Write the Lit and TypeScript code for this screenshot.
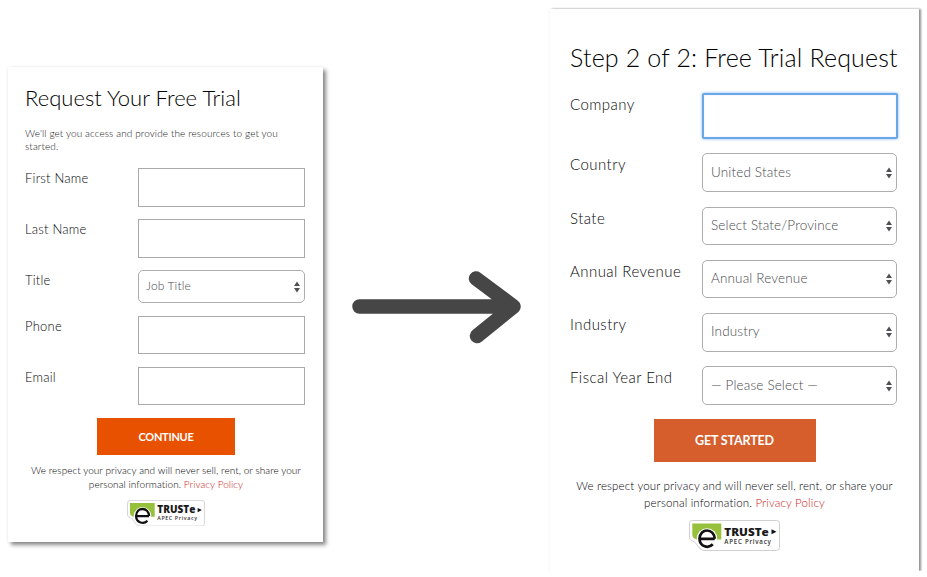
import { LitElement, html, svg, css } from "lit";
import { customElement, property } from "lit/decorators.js";

interface Field {
  label: string;
  kind: "input" | "focus" | "select";
  value?: string;
}

@customElement("trust-badge")
class TrustBadge extends LitElement {
  static styles = css`
    :host { display: block; }
    svg { display: block; width: 100%; height: 100%; }
    text { font-family: "Open Sans", "Liberation Sans", sans-serif; }
    .name { font-size: 11.2px; font-weight: 800; fill: #1a1a1a; }
    .sub { font-size: 6.2px; font-weight: 600; fill: #333; }
  `;
  render() {
    return html`<svg viewBox="0 0 91 31">${svg`
      <path d="M3.5 .5H87.500Q90.500 .5 90.500 3.500V27.500Q90.500 30.500 87.500 30.500H15Q10.500 30 8.500 25.500Q6.500 22 3.500 20.800Q.5 20 .5 17.500V3.500Q.5 .5 3.500 .5Z" fill="#fff" stroke="#cfcfcf"/>
      <path d="M3.300 3.500H32.300V19.500H27L18 9L8 19.500Q3.300 18.500 3.300 14.500Z" fill="#97c13c"/>
      <circle cx="18" cy="18.500" r="10.200" fill="#fff"/>
      <path d="M10.500 18.800H25.700M25.700 18.800C25.300 8 11 7.500 10.500 18.800C10.800 27 19.500 28.800 23.800 24.300" fill="none" stroke="#111" stroke-width="2.700"/>
      <text><tspan class="name" x="35.300" y="15.600" textLength="44.500" lengthAdjust="spacingAndGlyphs">TRUSTe</tspan><tspan class="sub" x="35.300" y="23.500" textLength="46.500">APEC Privacy</tspan></text>
      <path d="M82.500 9.300L87.500 11.800L82.500 14.300Z" fill="#111"/>
    `}</svg>`;
  }
}

@customElement("form-field")
class FormField extends LitElement {
  @property({ attribute: false }) field!: Field;
  static styles = css`
    :host { display: flex; justify-content: space-between; align-items: flex-start; }
    .label { color: #08080a; font-size: var(--label-size); letter-spacing: var(--label-track); line-height: var(--label-line); white-space: nowrap; }
    .box { box-sizing: border-box; width: var(--box-width); height: var(--input-height); border: 1px solid #aaa; background: #fff; }
    .select { display: flex; align-items: center; justify-content: space-between; height: var(--select-height); border-color: #adadad; border-radius: 5px; padding: 0 4px 0 var(--select-pad); color: #4a4a4e; font-size: var(--value-size); letter-spacing: var(--value-track); white-space: nowrap; }
    .value { margin-top: -2px; }
    .focus { width: calc(var(--box-width) + 1px); margin-right: -1px; border: 2px solid #6ba6e7; border-radius: 2px; box-shadow: 0 0 3px #75b2f4, inset 0 0 1px #9bc7f7; }
    svg { width: 6px; height: 12px; flex: none; }
  `;
  render() {
    const { label, kind, value } = this.field;
    return html`<span class="label">${label}</span>
      <div class="box ${kind}">${kind === "select"
        ? html`<span class="value">${value}</span><svg viewBox="0 0 6 12"><path d="M3 .5L6 5H0ZM0 7H6L3 11.500Z" fill="#505054"/></svg>`
        : ""}</div>`;
  }
}

const step1: Field[] = [
  { label: "First Name", kind: "input" },
  { label: "Last Name", kind: "input" },
  { label: "Title", kind: "select", value: "Job Title" },
  { label: "Phone", kind: "input" },
  { label: "Email", kind: "input" },
];

const step2: Field[] = [
  { label: "Company", kind: "focus" },
  { label: "Country", kind: "select", value: "United States" },
  { label: "State", kind: "select", value: "Select State/Province" },
  { label: "Annual Revenue", kind: "select", value: "Annual Revenue" },
  { label: "Industry", kind: "select", value: "Industry" },
  { label: "Fiscal Year End", kind: "select", value: "— Please Select —" },
];

@customElement("app-root")
class AppRoot extends LitElement {
  static styles = css`
    :host { display: flex; align-items: flex-start; box-sizing: border-box; width: 927px; height: 577px; padding: 9px 8px 0 8px; overflow: hidden; background: #fff; font-family: Lato, "Open Sans", sans-serif; font-weight: 300; }
    .card { box-sizing: border-box; display: flex; flex-direction: column; background: #fff; flex: none; }
    .first { width: 315px; height: 475px; margin-top: 58px; padding: 17px 18.500px 0 17px; box-shadow: 3px 3px 4px rgba(0,0,0,.46), 0 0 3px rgba(0,0,0,.07);
      --label-size: 13px; --label-track: .22px; --label-line: 20px; --box-width: 166.500px; --input-height: 38.400px; --select-height: 32.900px; --select-pad: 7px; --value-size: 12px; --value-track: .15px; }
    .second { width: 369px; height: 562px; margin-left: 28px; padding: 33px 22px 0 20px; box-shadow: 2px 0 2px rgba(0,0,0,.42), 0 0 3px rgba(0,0,0,.07); clip-path: inset(-6px -7px 0 -6px);
      --label-size: 15px; --label-track: .45px; --label-line: 22px; --box-width: 195px; --input-height: 46px; --select-height: 38.500px; --select-pad: 8px; --value-size: 13.500px; --value-track: .15px; }
    .title { margin: 0; font-weight: 300; color: #000; white-space: nowrap; }
    .first .title { font-size: 22px; line-height: 28px; letter-spacing: .02px; }
    .second .title { font-size: 25px; line-height: 32px; letter-spacing: .16px; margin-top: -1px; }
    .intro { margin: 15px 0 0; font-size: 10px; line-height: 12.500px; letter-spacing: .1px; color: #18181a; white-space: nowrap; }
    .fields { display: flex; flex-direction: column; }
    .first .fields { gap: 12.600px; margin-top: 16.200px; }
    .second .fields { gap: 14.800px; margin-top: 19.500px; }
    .button { display: flex; align-items: center; justify-content: center; align-self: center; color: #fff; font-weight: 700; white-space: nowrap; position: relative; }
    .first .content, .second .content { display: flex; flex-direction: column; }
    .first .content { margin-right: -1.500px; margin-left: 1px; }
    .second .content { margin-right: -1px; margin-left: 1px; }
    .first .button { width: 138px; height: 36.500px; margin-top: 13.200px; background: #e85100; font-size: 11px; letter-spacing: -.3px; }
    .second .button { width: 162px; height: 42.500px; margin-top: 14.500px; background: #d65d2c; font-size: 12.500px; letter-spacing: -.15px; }
    .privacy { text-align: center; align-self: center; white-space: nowrap; color: #040408; }
    .first .privacy { margin-top: 8px; font-size: 10px; line-height: 14.500px; letter-spacing: .05px; }
    .second .privacy { margin-top: 15.500px; font-size: 11.500px; line-height: 17px; letter-spacing: .15px; }
    .link { color: #cc1c18; }
    .badge { align-self: center; flex: none; }
    .first .badge { width: 78px; height: 26.500px; margin-top: 8px; }
    .second .badge { width: 91px; height: 31px; margin-top: 9px; }
    .arrow { width: 170px; height: 76px; margin: 260px 0 0 29px; flex: none; }
  `;

  footer(action: string) {
    return html`<div class="content">
      <div class="button">${action}</div>
      <div class="privacy">We respect your privacy and will never sell, rent, or share your<br>personal information. <span class="link">Privacy Policy</span></div>
      <trust-badge class="badge"></trust-badge>
    </div>`;
  }

  render() {
    return html`
      <section class="card first">
        <h1 class="title">Request Your Free Trial</h1>
        <p class="intro">We'll get you access and provide the resources to get you<br>started.</p>
        <div class="fields">${step1.map((f) => html`<form-field .field=${f}></form-field>`)}</div>
        ${this.footer("CONTINUE")}
      </section>
      <svg class="arrow" viewBox="0 0 170 76"><path d="M7.500 37.500H156M124 9.500L161.500 37.500L125 67" fill="none" stroke="#464646" stroke-width="14.500" stroke-linecap="round" stroke-linejoin="round"/></svg>
      <section class="card second">
        <h1 class="title">Step 2 of 2: Free Trial Request</h1>
        <div class="fields">${step2.map((f) => html`<form-field .field=${f}></form-field>`)}</div>
        ${this.footer("GET STARTED")}
      </section>`;
  }
}
